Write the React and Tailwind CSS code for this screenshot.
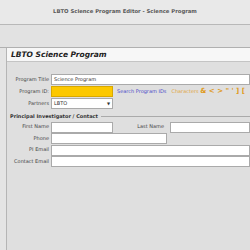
export default function App() {
  const font = { fontFamily: '"DejaVu Sans", sans-serif' };
  return (
    <div className="w-[250px] h-[250px] overflow-hidden bg-[#dfdfdf] flex flex-col" style={font}>
      <div className="h-[25px] shrink-0 bg-[#e9e9e9] border-b border-[#b8b8b8] flex items-center justify-center text-[5.3px] font-bold text-[#5a5a5a]">
        LBTO Science Program Editor - Science Program
      </div>
      <div className="h-[23px] shrink-0 bg-[#e2e2e2] border-b border-[#b0b0b0]"></div>
      <div className="flex-1 flex">
        <div className="w-[7px] shrink-0 border-r border-[#b5b5b5] bg-[#e4e4e4]"></div>
        <div className="flex-1 flex flex-col">
          <div className="h-[14px] bg-[#f7f7f7] border-b border-[#c4c4c4] flex items-center pl-[4px] text-[7.5px] font-bold italic text-[#222]">
            LBTO Science Program
          </div>
          <div className="pt-[12px] flex flex-col gap-[1px] text-[5px] text-[#444]">
            <div className="flex items-center h-[11px]">
              <div className="w-[43px] text-right pr-[1px]">Program Title</div>
              <div className="ml-[1px] flex-1 h-[11px] bg-white border border-[#aaa] flex items-center px-[2px] text-[#333]">Science Program</div>
            </div>
            <div className="flex items-center h-[11px]">
              <div className="w-[43px] text-right pr-[1px]">Program ID:</div>
              <div className="ml-[1px] w-[62px] h-[11px] bg-[#fcc800] border border-[#d9a800]"></div>
              <div className="ml-[4px] text-[#4b4bc8]">Search Program IDs</div>
              <div className="ml-[5px] text-[#e0a640] whitespace-nowrap">Characters <span className="font-bold text-[7px] text-[#e09a20]">&amp; &lt; &gt; " ' ] [</span></div>
            </div>
            <div className="flex items-center h-[11px]">
              <div className="w-[43px] text-right pr-[1px]">Partners</div>
              <div className="ml-[1px] w-[62px] h-[11px] bg-white border border-[#aaa] flex items-center justify-between px-[2px] text-[#333]">
                <span>LBTO</span>
                <span className="text-[4px]">▼</span>
              </div>
            </div>
          </div>
          <div className="mt-[4px] flex items-center pl-[3px] text-[5px] font-bold text-[#333]">
            <span>Principal Investigator / Contact</span>
            <div className="ml-[3px] flex-1 border-t border-[#aaa]"></div>
          </div>
          <div className="pt-[1px] flex flex-col gap-[0.5px] text-[5px] text-[#444]">
            <div className="flex items-center h-[11px]">
              <div className="w-[43px] text-right pr-[1px]">First Name</div>
              <div className="ml-[1px] w-[62px] h-[11px] bg-white border border-[#aaa]"></div>
              <div className="w-[57px] text-right pr-[6px]">Last Name</div>
              <div className="flex-1 h-[11px] bg-white border border-[#aaa]"></div>
            </div>
            <div className="flex items-center h-[11px]">
              <div className="w-[43px] text-right pr-[1px]">Phone</div>
              <div className="ml-[1px] w-[116px] h-[11px] bg-white border border-[#aaa]"></div>
            </div>
            <div className="flex items-center h-[11px]">
              <div className="w-[43px] text-right pr-[1px]">PI Email</div>
              <div className="ml-[1px] flex-1 h-[11px] bg-white border border-[#aaa]"></div>
            </div>
            <div className="flex items-center h-[11px]">
              <div className="w-[43px] text-right pr-[1px]">Contact Email</div>
              <div className="ml-[1px] flex-1 h-[11px] bg-white border border-[#aaa]"></div>
            </div>
          </div>
        </div>
      </div>
    </div>
  );
}
